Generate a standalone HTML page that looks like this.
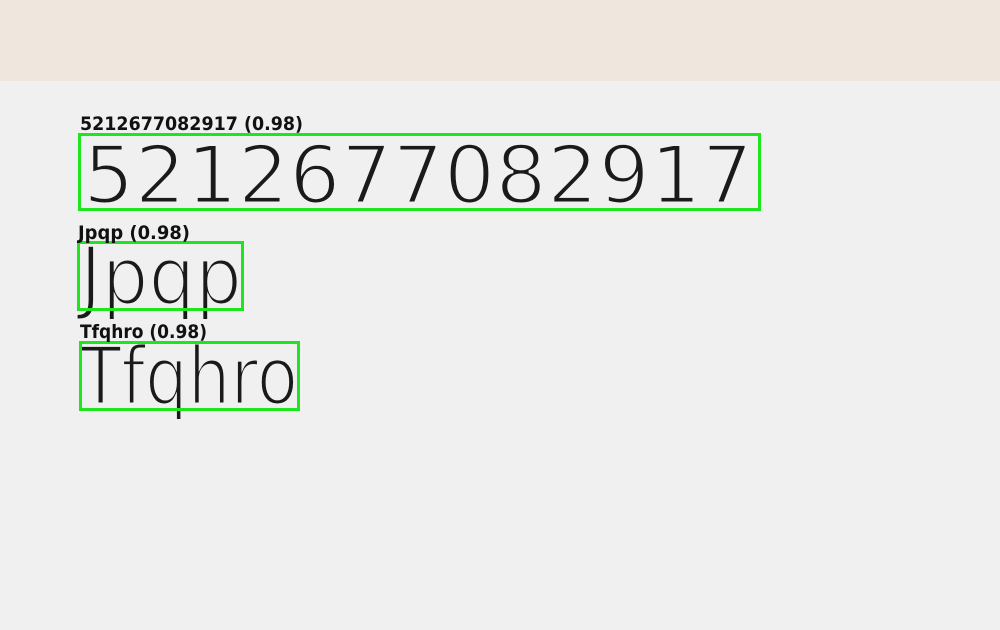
<!DOCTYPE html>
<html><head><meta charset="utf-8"><style>
html,body{margin:0;padding:0;width:1000px;height:630px;overflow:hidden;background:#f0f0f0}
</style></head><body>
<svg width="1000" height="630" xmlns="http://www.w3.org/2000/svg" style="display:block">
<rect x="0" y="0" width="1000" height="81" fill="#efe6dd"/>
<rect x="0" y="81" width="1000" height="549" fill="#f0f0f0"/>
<g font-family="DejaVu Sans, sans-serif" fill="#1a1a1a" font-weight="normal" font-size="80" stroke="#f0f0f0" stroke-width="3">
<text x="83" y="203" textLength="670" lengthAdjust="spacingAndGlyphs">5212677082917</text>
<text x="80" y="304" textLength="162" lengthAdjust="spacingAndGlyphs">Jpqp</text>
<text x="80" y="404" textLength="218" lengthAdjust="spacingAndGlyphs">Tfqhro</text>
</g>
<g fill="none" stroke="#1ee61e" stroke-width="3">
<rect x="79.5" y="134.5" width="680" height="75"/>
<rect x="78.5" y="242.5" width="164" height="67"/>
<rect x="80.5" y="342.5" width="218" height="67"/>
</g>
<g font-family="DejaVu Sans, sans-serif" fill="#111" font-weight="bold" font-size="19">
<text x="80" y="130" textLength="223" lengthAdjust="spacingAndGlyphs">5212677082917 (0.98)</text>
<text x="78" y="239" textLength="112" lengthAdjust="spacingAndGlyphs">Jpqp (0.98)</text>
<text x="80" y="338" textLength="127" lengthAdjust="spacingAndGlyphs">Tfqhro (0.98)</text>
</g>
</svg>
</body></html>
